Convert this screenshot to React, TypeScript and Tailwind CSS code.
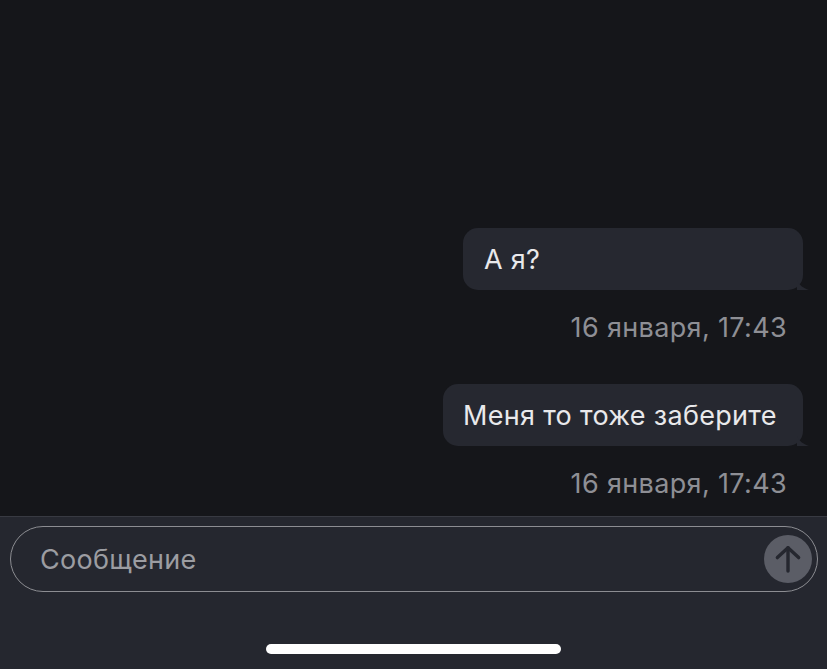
import React from 'react';

const Tail = () => (
  <svg className="absolute -right-[6px] bottom-0" width="12" height="10" viewBox="0 0 12 10">
    <path d="M0 0 C2 5 6 8 12 10 L0 10 Z" fill="#262830" />
  </svg>
);

const Message = ({ text, className }: { text: string; className?: string }) => (
  <div className={`relative rounded-[15px] bg-[#262830] pb-[14px] pt-[16px] text-[27px] leading-[32px] tracking-[0.3px] text-[#e9e9eb] ${className ?? ''}`}>
    {text}
    <Tail />
  </div>
);

const Stamp = () => (
  <div className="mr-[16px] mt-[22px] text-[27px] leading-[32px] tracking-[0.35px] text-[#8e8f95]">16 января, 17:43</div>
);

export default function App() {
  return (
    <div
      className="flex h-[669px] w-[827px] flex-col bg-[#15161a]"
      style={{ fontFamily: 'Inter, "Noto Sans", sans-serif' }}
    >
      {/* Messages */}
      <div className="flex flex-1 flex-col items-end justify-end pb-[16px] pr-[24px]">
        <Message text="А я?" className="w-[340px] pl-[21px]" />
        <Stamp />
        <Message text="Меня то тоже заберите" className="mt-[40px] w-[360px] pl-[20px]" />
        <Stamp />
      </div>

      {/* Composer */}
      <div className="flex h-[153px] flex-col border-t border-[#383a42] bg-[#25272f] px-[9px] pt-[9px]">
        <div className="ml-px flex h-[66px] items-center rounded-full border border-[#8c8d92] pl-[29px] pr-[5px]">
          <span className="flex-1 pt-px text-[27px] leading-[32px] tracking-[0.3px] text-[#9c9da2]">Сообщение</span>
          <div className="flex h-[48px] w-[48px] items-center justify-center rounded-full bg-[#5b5d66]">
            <svg width="34" height="34" viewBox="0 0 24 24" fill="none" stroke="#25272f" strokeWidth="2.4" strokeLinecap="round" strokeLinejoin="round">
              <path d="M12 20.5V4" />
              <path d="M4.5 11l7.5-7 7.5 7" />
            </svg>
          </div>
        </div>
        <div className="mt-[52px] flex justify-center">
          <div className="h-[10px] w-[295px] rounded-full bg-white" />
        </div>
      </div>
    </div>
  );
}
